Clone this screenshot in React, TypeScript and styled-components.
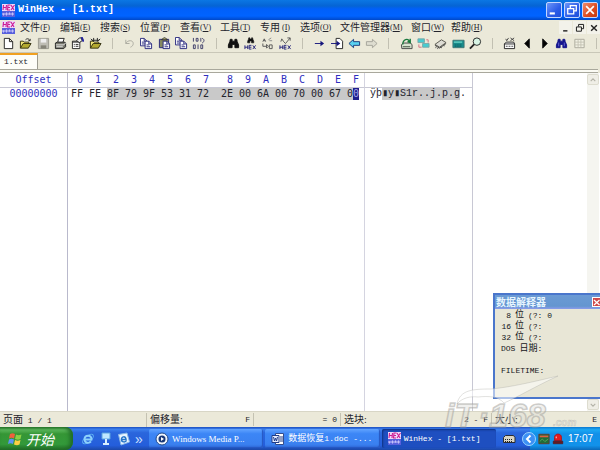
import React from "react";
import styled, { createGlobalStyle, css } from "styled-components";

const Global = createGlobalStyle`
  * { box-sizing: border-box; }
  body { margin: 0; background: #fff; }
  button { font: inherit; color: inherit; background: none; border: 0; padding: 0; margin: 0; }
  svg { display: block; }
`;

const ui = `"Liberation Serif", "Noto Sans CJK SC", sans-serif`;
const mono = `"Liberation Mono", "Noto Sans CJK SC", monospace`;
const face = "#ebe9d9";
const ink = "#23232b";

const Desktop = styled.div`
  position: relative;
  display: flex;
  flex-direction: column;
  height: 100vh;
  overflow: hidden;
  background: ${face};
  color: ${ink};
  font: 10px/14px ${ui};
  white-space: nowrap;
`;

const TitleBar = styled.header`
  display: flex;
  align-items: center;
  gap: 3px;
  height: 20px;
  flex: none;
  padding: 0 2px;
  background: linear-gradient(#0b77e4 0, #0564d4 30%, #0060fa 45%, #0063ff 80%, #0048c8 100%);
`;

const Title = styled.h1`
  flex: 1;
  margin: 0;
  color: #fff;
  font: bold 10px/16px ${mono};
`;

const Caption = styled.button<{ $close?: boolean }>`
  display: grid;
  place-items: center;
  width: 16px;
  height: 16px;
  border: 1px solid #c4d6ff;
  border-radius: 2px;
  margin-left: -1px;
  background: ${(p) => (p.$close ? "linear-gradient(135deg, #ef8c6c, #dc4a20 60%, #c03a12)" : "linear-gradient(135deg, #6c95f8, #2c5ce8 60%, #1f4fd8)")};
`;

const MenuBar = styled.nav`
  display: flex;
  align-items: center;
  height: 15px;
  flex: none;
  padding-left: 2px;
`;

const Menus = styled.div`
  display: flex;
  flex: 1;
  gap: 10px;
  padding-left: 5px;
`;

const MenuItem = styled.button<{ $wide?: boolean }>`
  display: flex;
  align-items: center;
  justify-content: space-between;
  width: ${(p) => (p.$wide ? 61 : 30)}px;
  line-height: 14px;
  flex: none;
`;

const Key = styled.span`
  font: 8px/14px ${ui};
`;

const ChildButtons = styled.div`
  display: flex;
  gap: 1px;
  button {
    display: grid;
    place-items: center;
    width: 13px;
    height: 13px;
    background: #f3f2ea;
  }
`;

const ToolBar = styled.div`
  display: grid;
  grid-template-columns: repeat(35, 1fr);
  align-items: center;
  height: 18px;
  flex: none;
  margin-right: -5px;
  border-bottom: 1px solid #c9c7b8;
`;

const Tool = styled.button`
  display: grid;
  place-items: center;
  height: 16px;
`;

const ToolRule = styled.span`
  justify-self: center;
  width: 1px;
  height: 11px;
  background: #c2c0b2;
`;

const TabStrip = styled.div`
  display: flex;
  height: 16px;
  flex: none;
`;

const Tab = styled.button`
  width: 38px;
  padding-left: 4px;
  text-align: left;
  background: #fdfdf8;
  border-top: 2px solid #f0a020;
  border-right: 1px solid #9c9b90;
  font: 8px/14px ${mono};
`;

const Groove = styled.div`
  height: 4px;
  flex: none;
  margin-right: 2px;
  background: #fbfbf4;
  border-top: 1px solid #a9a89c;
  border-bottom: 1px solid #a9a89c;
`;

const Editor = styled.main`
  display: flex;
  flex: 1;
  min-height: 0;
  background: #fff;
`;

const HexTable = styled.table`
  height: 100%;
  border-collapse: separate;
  border-spacing: 0;
  table-layout: fixed;
  width: 473px;
  font: 10px/12px "DejaVu Sans Mono", monospace;
  td, th { padding: 0; font-weight: normal; text-align: left; vertical-align: top; }
  th { color: #2f2fc0; }
  thead th { height: 15px; line-height: 14px; border-bottom: 1px solid #c8c8d4; }
  tr > :first-child { border-right: 1px solid #b9b9cc; text-align: center; }
  tr > :nth-child(18) { border-right: 1px solid #d4d4e0; }
  tr > :last-child { border-right: 1px solid #c8c8d4; padding-left: 5px; }
`;

const DataRow = styled.tr`
  height: 13px;
`;

const Digit = styled.th`
  && { padding-left: 6px; }
`;

const Digit8 = styled.th`
  && { padding-left: 12px; }
`;

const Byte = styled.span<{ $on?: boolean; $lead?: boolean; $end?: boolean }>`
  display: block;
  height: 12px;
  line-height: 12px;
  padding-left: ${(p) => (p.$lead ? 6 : 0)}px;
  ${(p) => p.$on && css`background: #c9c9c9;`}
  ${(p) => p.$end && css`width: 12px;`}
`;

const Cursor = styled.span`
  display: inline-block;
  background: #20208c;
  color: #a8a8e8;
`;

const Ascii = styled.span<{ $on?: boolean }>`
  float: left;
  height: 12px;
  font: 10px/12px "Liberation Mono", monospace;
  ${(p) => p.$on && css`background: #c9c9c9;`}
`;

const ScrollBar = styled.div`
  display: flex;
  flex-direction: column;
  justify-content: space-between;
  width: 12px;
  margin: 0 1px 0 auto;
  padding: 1px 0;
  background: #f5f5f0;
  button {
    display: grid;
    place-items: center;
    height: 11px;
    border: 1px solid #dddccf;
    border-radius: 2px;
    background: #efeee6;
  }
`;

const StatusBar = styled.footer`
  display: grid;
  grid-template-columns: 147fr 107fr 87fr 151fr 108fr;
  align-items: center;
  height: 16px;
  flex: none;
  border-top: 1px solid #d8d6c6;
`;

const StatusCell = styled.div<{ $last?: boolean }>`
  display: flex;
  justify-content: space-between;
  padding: 0 3px;
  border-right: ${(p) => (p.$last ? "0" : "1px solid #c4c2b2")};
  line-height: 13px;
`;

const Figure = styled.span`
  font: 8px/13px ${mono};
`;

const TaskBar = styled.div`
  display: flex;
  align-items: center;
  height: 23px;
  flex: none;
  color: #fff;
  background: linear-gradient(#1c4fc0 0, #3c80ee 10%, #2a66dc 25%, #245edb 80%, #1c48a8 100%);
`;

const Start = styled.button`
  display: flex;
  align-items: center;
  gap: 4px;
  align-self: stretch;
  width: 73px;
  padding-left: 8px;
  border-radius: 0 8px 8px 0;
  background: linear-gradient(#2c7c2c 0, #5cb85c 12%, #359635 30%, #33993a 75%, #226c26 100%);
  box-shadow: inset -3px 0 4px #1f6a26;
  font: italic 14px/20px "Noto Sans CJK SC", sans-serif;
`;

const Quick = styled.div`
  display: flex;
  align-items: center;
  gap: 4px;
  width: 76px;
  padding-left: 8px;
  font: 14px/18px "Liberation Sans", sans-serif;
  color: #cfe2ff;
`;

const Tasks = styled.div`
  display: flex;
  flex: 1;
  gap: 2px;
  min-width: 0;
`;

const Task = styled.button<{ $active?: boolean }>`
  display: flex;
  align-items: center;
  gap: 3px;
  flex: 1;
  min-width: 0;
  height: 19px;
  padding-left: 6px;
  border-radius: 2px;
  overflow: hidden;
  font: 9px/16px ${ui};
  background: ${(p) => (p.$active ? "#1e4fc0" : "linear-gradient(#62a4ff, #3c86f6 25%, #3a80f0 80%, #2f6ad8)")};
  box-shadow: ${(p) => (p.$active ? "inset 1px 1px 2px #10317e" : "inset -1px -1px 1px #2656c0")};
`;

const TaskName = styled.span<{ $mono?: boolean }>`
  ${(p) => p.$mono && css`font: 8px/16px ${mono};`}
`;

const Language = styled.div`
  width: 34px;
  padding-left: 6px;
`;

const Tray = styled.div`
  display: flex;
  align-items: center;
  align-self: stretch;
  gap: 2px;
  width: 70px;
  background: linear-gradient(#0c78d0 0, #1ba8f4 12%, #1290e8 30%, #1292ea 80%, #0b68b8 100%);
  svg:first-child { margin-left: -8px; }
  time { margin-left: 2px; font: 10px/16px "Liberation Sans", sans-serif; }
`;

const Palette = styled.aside`
  position: absolute;
  right: 0;
  bottom: 51px;
  width: 107px;
  height: 106px;
  border: 2px solid #4a76cc;
  border-right: 0;
  background: #e8e6d6;
  overflow: hidden;
`;

const PaletteHead = styled.div`
  display: flex;
  align-items: center;
  justify-content: space-between;
  height: 14px;
  padding-left: 1px;
  background: linear-gradient(#6b9ad4 0, #6496d0 80%, #8c9cec 100%);
  h2 { margin: 0; font: bold 10px/12px "Noto Sans CJK SC", sans-serif; color: #e6f5ff; }
  button {
    display: grid;
    place-items: center;
    width: 8px;
    height: 10px;
    background: #d04848;
    border: 1px solid #fff;
    border-right: 0;
  }
`;

const Readout = styled.div`
  padding: 1px 6px;
  font: 8px/11px ${mono};
  color: #15151a;
`;

const Line = styled.div`
  display: flex;
  align-items: center;
  gap: 4px;
  height: 11px;
`;

const Count = styled.span`
  width: 10px;
  text-align: right;
`;

const Unit = styled.span`
  font-size: 9px;
`;

const Watermark = styled.svg`
  position: absolute;
  right: 20px;
  bottom: 16px;
  pointer-events: none;
`;

const Ico = ({ children, size = 14 }: { children: React.ReactNode; size?: number }) => (
  <svg width={size} height={size} viewBox="0 0 14 14" fill="none" stroke="#222" strokeWidth="1" aria-hidden="true">{children}</svg>
);

const Logo = () => (
  <svg width="13" height="13" viewBox="0 0 13 13" aria-hidden="true">
    <rect width="13" height="13" fill="#ecd8fa" />
    <rect y="7" width="13" height="6" fill="#5860dc" />
    <path d="M1.500 1L1 6M4.500 1L4 6M1 3.500h3M8.500 1H6L5.500 6H8M5.500 3.500H8M9 1l3 5M12.500 1L9 6" stroke="#cc1c94" strokeWidth="1.100" fill="none" />
    <path d="M1 9v2h1V9M4 9h1v2H4zM7 11V9h1v2M10 9h1v2h-1z" stroke="#d8d4ff" strokeWidth="0.900" fill="none" />
  </svg>
);

const Binoculars = ({ c = "#111" }: { c?: string }) => (
  <path d="M3.500 1.500h2v2h3v-2h2l.5 2.500 1.500 3.500v3H8.500V7h-3v3.500h-4v-3L3 4z" fill={c} stroke={c} />
);
const hexMark = (
  <path d="M1 9v4M4 9v4M1 11h3M8 9H5.500v4H8M5.500 11H8M9.500 9l3 4M12.500 9l-3 4" stroke="#202078" />
);
const page = (x: number, y: number) => (
  <g transform={`translate(${x} ${y})`}>
    <path d="M.5.5h4l3 3v5h-7z" fill="#fff" stroke="#26267c" />
    <path d="M4.500.5v3h3M2 4.500h3M2 6.500h4" stroke="#26267c" />
  </g>
);
const folder = (
  <>
    <path d="M1.500 12V4.500h3l1 1h5V8" fill="#f4e878" stroke="#333010" />
    <path d="M1.500 12l3-5h8.500l-3 5z" fill="#b4aa30" stroke="#333010" />
  </>
);

const tools: [string, React.ReactNode][] = [
  ["New", <path d="M2.500 1.500h5.500l3.500 3.500v7.500h-9zM8 1.500V5h3.500" fill="#fff" />],
  ["Open", <>{folder}<path d="M7 3c2-2 4-1 4.500 1M10 4h2V2" /></>],
  ["Save", <><path d="M1.500 1.500h11v11h-11z" fill="#bebdb4" stroke="#99988e" /><path d="M4 2h6v4H4z" fill="#eee" stroke="none" /><path d="M4 9h6v3.500H4z" fill="#858478" stroke="none" /></>],
  ["Print", <><path d="M4 6l1-4.500h6L9.500 6z" fill="#fff" /><path d="M1.500 6.500l2-1h8l1 1v4l-2 2h-9z" fill="#77776c" /><path d="M2 8.500h8.500l2-2M2.500 10.500h7" stroke="#eee" /></>],
  ["Properties", <><path d="M1.500 4.500h8v8h-8z" fill="#fff" /><path d="M1.500 5.500h8M3 8h1M5 8h3M3 10h1M5 10h3" /><path d="M6 4l3-3h2l1 3-3 2z" fill="#eee" /><path d="M11.500 0l2 5" stroke="#2424a0" strokeWidth="2" /></>],
  ["Open folder", <>{folder}<path d="M3 3.500h8M5 1v4M9 1v4M2 2l2 2M12 2l-2 2" /></>],
  ["|", null],
  ["Undo", <path d="M3 3v4h4M3 7c2-4 8-4 8 0 0 2-1 3-3 4" stroke="#aaa99f" />],
  ["Copy block", <>{page(0, 1)}{page(5, 4)}</>],
  ["Paste", <><path d="M1.500 2.500h10v9h-10z" fill="#858860" stroke="#26267c" /><path d="M4 3l2-2h2l2 2z" fill="#eee890" />{page(5, 4)}</>],
  ["Copy", <>{page(0, 0)}{page(5, 4)}</>],
  ["Binary", <path d="M1.500 1v4M4.500 1.500h2v3h-2zM9.500 1v4M1.500 8.500h2v4h-2zM6.500 8v5M9.500 8.500h2v4h-2zM11 1.500c3 1 2 4 0 5" stroke="#3a3a68" />],
  ["|", null],
  ["Find text", <g transform="translate(0 1)"><Binoculars /></g>],
  ["Find hex", <><g transform="translate(3 0) scale(.6)"><Binoculars /></g>{hexMark}</>],
  ["Replace text", <><path d="M2 5l1.500-3L5 5M2.500 4h2M9 8.500h3v4H9zM2 7v3h4M6 8v4l2-2z" stroke="#555" /><path d="M8 3l3-2M9 4h3" stroke="#888" /></>],
  ["Replace hex", <><path d="M2 5l1-3 2 3 2 2 5-6M9 1h3v3" stroke="#555" />{hexMark}</>],
  ["|", null],
  ["Go to offset", <><path d="M2 7h8" stroke="#15157c" /><path d="M8 4l4 3-4 3z" fill="#15157c" stroke="none" /></>],
  ["Go to page", <><path d="M5.500 1.500h4l3 3v8h-7z" fill="#fff" /><path d="M0 7h7" stroke="#15157c" /><path d="M6 4l4 3-4 3z" fill="#15157c" stroke="none" /></>],
  ["Back", <path d="M1 7l5-4.500V5h6.500v4H6v2.500z" fill="#58d0f0" stroke="#18387c" />],
  ["Forward", <path d="M13 7L8 2.500V5H1.500v4H8v2.500z" fill="#deddd0" stroke="#a3a298" />],
  ["|", null],
  ["Open disk", <><path d="M1.500 8.500l2-2h8l1.500 2v4h-11z" fill="#d8e4d0" stroke="#444" /><path d="M3 8C3 2 9 1 10 5M8 5l3 1V2" stroke="#18783c" strokeWidth="1.500" /><path d="M3 10.500h8" stroke="#384838" /></>],
  ["Clone disk", <><path d="M1 2h7v4H1zM6 7h7v4H6z" fill="#46ccd0" stroke="#7ba8a8" /><path d="M2 8v3h3M10 3h2v3" stroke="#d07080" /></>],
  ["Open RAM", <><path d="M1 8l7-5 5 3-7 5z" fill="#dddcd4" stroke="#55544c" /><path d="M1 9l5 3 7-5M2 11v1M4 12v1M8 11v1M11 9v1" stroke="#444" /></>],
  ["Calculator", <><path d="M1 3.500h12v8H1z" fill="#188c8c" stroke="#3c7474" /><path d="M2 5.500h9" stroke="#8cf0e0" /><path d="M3 8.500h8M3 10h8" stroke="#0c5058" strokeDasharray="1 1" /></>],
  ["Analyze", <><circle cx="8.500" cy="5" r="4" fill="#d8f4e4" /><path d="M5.500 8L1 12.500" strokeWidth="2" /></>],
  ["|", null],
  ["Options", <><path d="M1.500 7.500h11v5h-11zM1.500 7.500l2-2h8l1 2" fill="#fff" /><path d="M3 10h2M6 10h2M9 10h2M3 2l1 2 2-3M8 1l4 3M12 1L8 4" stroke="#444" /></>],
  ["Previous", <path d="M9 2v10L4 7z" fill="#000" />],
  ["Next", <path d="M5 2v10l5-5z" fill="#000" />],
  ["Search again", <g transform="translate(0 1)"><Binoculars c="#15158c" /><path d="M4 5v4M10 5v4" stroke="#6464d8" /></g>],
  ["Table", <><path d="M2 2.500h10v9H2z" fill="#f2f1e4" stroke="#aaa99c" /><path d="M5.500 3v8M8.500 3v8M2 5.500h10M2 8.500h10" stroke="#c4c3b4" /></>],
  ["|", null],
];

const menus = [["文件", "F"], ["编辑", "E"], ["搜索", "S"], ["位置", "P"], ["查看", "V"], ["工具", "T"], ["专用", "I"], ["选项", "O"], ["文件管理器", "M"], ["窗口", "W"], ["帮助", "H"]];
const bytes = "FF FE 8F 79 9F 53 31 72 2E 00 6A 00 70 00 67 00".split(" ");
const digits = "0123456789ABCDEF".split("");

export default function App() {
  return (
    <Desktop>
      <Global />
      <TitleBar>
        <Logo />
        <Title>WinHex - [1.txt]</Title>
        <Caption aria-label="Minimize"><Ico size={12}><path d="M2 11h6" stroke="#fff" strokeWidth="2.500" /></Ico></Caption>
        <Caption aria-label="Restore"><Ico size={12}><path d="M5 5V2h7v6H9M2 5.500h7v6H2z" stroke="#fff" strokeWidth="1.500" /></Ico></Caption>
        <Caption $close aria-label="Close"><Ico size={12}><path d="M2.500 2.500l9 9M11.500 2.500l-9 9" stroke="#fff" strokeWidth="2" /></Ico></Caption>
      </TitleBar>
      <MenuBar>
        <Logo />
        <Menus>
          {menus.map(([name, key]) => (
            <MenuItem key={name} $wide={name.length > 2}>{name}<Key>(<u>{key}</u>)</Key></MenuItem>
          ))}
        </Menus>
        <ChildButtons>
          <button aria-label="Minimize document"><Ico size={10}><path d="M3 11h6" strokeWidth="2" /></Ico></button>
          <button aria-label="Restore document"><Ico size={10}><path d="M5 5V2h7v6H9M2 5.500h7v6H2z" strokeWidth="1.400" /></Ico></button>
          <button aria-label="Close document"><Ico size={10}><path d="M3 3l8 8M11 3l-8 8" strokeWidth="2" /></Ico></button>
        </ChildButtons>
      </MenuBar>
      <ToolBar>
        {tools.map(([name, art], i) => (name === "|" ? <ToolRule key={i} /> : <Tool key={i} aria-label={name}><Ico size={13}>{art}</Ico></Tool>))}
      </ToolBar>
      <TabStrip><Tab>1.txt</Tab></TabStrip>
      <Groove />
      <Editor>
        <HexTable>
          <colgroup>
            <col style={{ width: 68 }} />
            <col style={{ width: 3 }} />
            {digits.map((d) => <col key={d} style={{ width: d === "8" ? 24 : 18 }} />)}
            <col />
          </colgroup>
          <thead>
            <tr>
              <th>Offset</th><th />
              {digits.map((d) => (d === "8" ? <Digit8 key={d}>{d}</Digit8> : <Digit key={d}>{d}</Digit>))}
              <th />
            </tr>
          </thead>
          <tbody>
            <DataRow>
              <th>00000000</th><td />
              {bytes.map((b, i) => (
                <td key={i}>
                  <Byte $on={i > 1} $lead={i === 8} $end={i === 15}>{i === 15 ? <>0<Cursor>0</Cursor></> : b}</Byte>
                </td>
              ))}
              <td><Ascii>ÿþ</Ascii><Ascii $on>▮y▮S1r..j.p.g</Ascii><Ascii>.</Ascii></td>
            </DataRow>
            <tr><td /><td />{digits.map((d) => <td key={d} />)}<td /></tr>
          </tbody>
        </HexTable>
        <ScrollBar>
          <button aria-label="Scroll up"><Ico size={8}><path d="M3 9l4-4 4 4" stroke="#b4b3a8" strokeWidth="2" /></Ico></button>
          <button aria-label="Scroll down"><Ico size={8}><path d="M3 5l4 4 4-4" stroke="#b4b3a8" strokeWidth="2" /></Ico></button>
        </ScrollBar>
      </Editor>
      <StatusBar>
        <StatusCell><span>页面<Figure> 1 / 1</Figure></span></StatusCell>
        <StatusCell><span>偏移量:</span><Figure>F</Figure></StatusCell>
        <StatusCell><span /><Figure>= 0</Figure></StatusCell>
        <StatusCell><span>选块:</span><Figure>2 - F</Figure></StatusCell>
        <StatusCell $last><span>大小:</span><Figure>E</Figure></StatusCell>
      </StatusBar>
      <TaskBar>
        <Start>
          <svg width="14" height="14" viewBox="0 0 14 14" aria-hidden="true">
            <path d="M2 2c2-1 3-1 5 0L6 6.500C4 5.500 3 5.500 1 6.500z" fill="#f0603c" />
            <path d="M8 2.500c2 1 3 1 5.500 0l-1 4.500c-2 1-3 1-5.500 0z" fill="#8cd044" />
            <path d="M1 7.500c2-1 3-1 5 0L5 12c-2-1-3-1-5 0z" fill="#5c94f4" />
            <path d="M7 8c2 1 3 1 5.500 0l-1 4.500c-2 1-3 1-5.500 0z" fill="#fcd044" />
          </svg>
          开始
        </Start>
        <Quick>
          <Ico><ellipse cx="7" cy="7" rx="6.500" ry="3" transform="rotate(-40 7 7)" stroke="#60b4f4" /><path d="M3.500 7.500h7c0-5-7-5-7 0 0 4 5 4 6.500 2" stroke="#8cd0fc" strokeWidth="1.800" /></Ico>
          <Ico><path d="M3 1h8v6H3z" fill="#c0e8ff" stroke="#5ca4e0" /><path d="M7 7v4M4 12h6" stroke="#d8f0ff" strokeWidth="2" /></Ico>
          <Ico><path d="M1.500 2.500L10 1l2.500 9L4 13z" fill="#e8f4ff" stroke="#88b8e8" /><path d="M5 7.500h4c0-4-5-3-4.500 0 0 3 4 3 5 1" stroke="#2474c8" strokeWidth="1.500" /></Ico>
          »
        </Quick>
        <Tasks>
          <Task>
            <Ico><circle cx="7" cy="7" r="6" fill="#eef4fc" stroke="#204888" /><circle cx="7" cy="7" r="3.500" fill="#183878" stroke="none" /><path d="M6 5l3 2-3 2z" fill="#fff" stroke="none" /></Ico>
            <TaskName>Windows Media P...</TaskName>
          </Task>
          <Task>
            <Ico><path d="M4.500 1.500h8v11h-8z" fill="#fff" stroke="#344c8c" /><path d="M1 3.500h7v7H1z" fill="#e4ecff" stroke="#203c88" /><path d="M2.500 5l1 4 1-3 1 3 1-4M9 5h3M9 7h3M9 9h3" stroke="#203c88" /></Ico>
            <TaskName>数据恢复<TaskName $mono>1.doc -...</TaskName></TaskName>
          </Task>
          <Task $active><Logo /><TaskName $mono>WinHex - [1.txt]</TaskName></Task>
        </Tasks>
        <Language><Ico><path d="M1.500 5.500l2-2h8l1.500 2v5H1.500z" fill="#d8d4c4" stroke="#2c2c30" /><path d="M3 7.500h8M3 9.500h8" strokeDasharray="1 1" /></Ico></Language>
        <Tray>
          <Ico><circle cx="7" cy="7" r="6.500" fill="#3c90f4" stroke="#9cd4ff" /><path d="M8.500 3.500L5 7l3.500 3.500" stroke="#fff" strokeWidth="2" /></Ico>
          <Ico size={12}><path d="M1 1.500h12v11H1z" fill="#206c38" stroke="#683828" /><path d="M2 4h10" stroke="#e06040" strokeWidth="2" /><path d="M2 10l3-3 3 3 4-3" stroke="#58a860" /></Ico>
          <Ico size={12}><path d="M3 9V5c0-5 8-5 8 0v4z" fill="#e41c20" stroke="#b01018" /><path d="M1.500 9.500h11v3h-11z" fill="#681820" stroke="#502028" /><path d="M5 6V4" stroke="#ffb0a0" strokeWidth="1.500" /></Ico>
          <time>17:07</time>
        </Tray>
      </TaskBar>
      <Palette>
        <PaletteHead>
          <h2>数据解释器</h2>
          <button aria-label="Close interpreter"><Ico size={7}><path d="M2 2l11 10M13 2L2 12" stroke="#fff" strokeWidth="2.500" /></Ico></button>
        </PaletteHead>
        <Readout>
          <Line><Count>8</Count><Unit>位</Unit><span>(?: 0</span></Line>
          <Line><Count>16</Count><Unit>位</Unit><span>(?:</span></Line>
          <Line><Count>32</Count><Unit>位</Unit><span>(?:</span></Line>
          <Line><span>DOS</span><span><Unit>日期</Unit>:</span></Line>
          <Line />
          <Line>FILETIME:</Line>
        </Readout>
      </Palette>
      <Watermark width="136" height="62" viewBox="0 0 136 62" aria-hidden="true">
        <path d="M13 32C16 18 28 17 47 17 68 15 88 10 114 4 92 14 72 26 60 31 54 24 44 24 34 25 26 24 18 26 13 32z" fill="#fff" fillOpacity="0.550" stroke="#aaa9a4" strokeOpacity="0.350" />
        <g fill="#dededa" fillOpacity="0.450" stroke="#999894" strokeOpacity="0.450" strokeWidth="1.500" fontFamily="Liberation Sans" fontStyle="italic" fontWeight="bold">
          <text x="1" y="55" fontSize="34">iT</text>
          <text x="34" y="55" fontSize="34">·</text>
          <text x="45" y="55" fontSize="34">168</text>
          <text x="109" y="54" fontSize="10" strokeWidth="0.500">.com</text>
        </g>
      </Watermark>
    </Desktop>
  );
}
